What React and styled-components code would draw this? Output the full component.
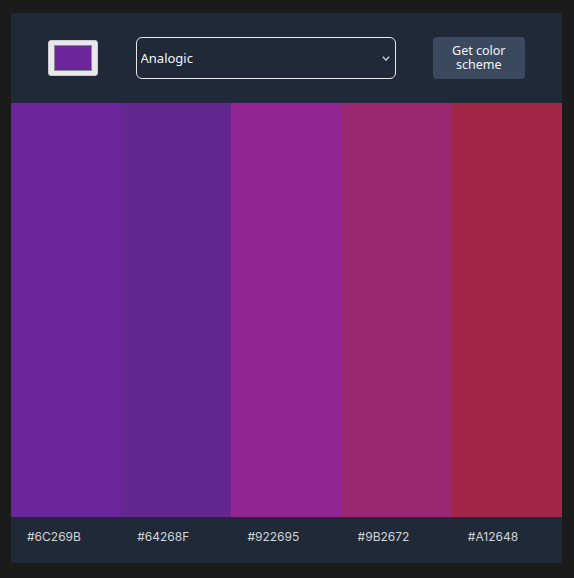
import styled, { createGlobalStyle } from 'styled-components'

const colors = ['#6C269B', '#64268F', '#922695', '#9B2672', '#A12648']

const GlobalStyle = createGlobalStyle`
  html, body {
    margin: 0;
    background-color: #1b1b1b;
  }
  #root {
    padding: 13px 0 15px;
  }
`

export default function App() {
  return (
    <>
      <GlobalStyle />
      <Wrapper>
        <Header>
          <ColorPicker type="color" defaultValue="#6c269b" />
          <SelectWrap>
            <Select defaultValue="analogic">
              <option value="monochrome">Monochrome</option>
              <option value="analogic">Analogic</option>
              <option value="complement">Complement</option>
            </Select>
            <Chevron width="8" height="5" viewBox="0 0 8 5">
              <path d="M0.8 0.8 L4 4 L7.2 0.8" fill="none" stroke="#d1d5db" strokeWidth="1.3" />
            </Chevron>
          </SelectWrap>
          <GetButton>Get color<br />scheme</GetButton>
        </Header>
        <Strip>
          {colors.map(c => <Swatch key={c} $color={c} />)}
        </Strip>
        <Footer>
          {colors.map(c => <HexLabel key={c}>{c}</HexLabel>)}
        </Footer>
      </Wrapper>
    </>
  )
}

const Wrapper = styled.main`
width: 551px;
margin: 0 0 0 11px;
display: flex;
flex-direction: column;
`

const Header = styled.header`
height: 90px;
background-color: #1f2937;
display: flex;
align-items: center;
justify-content: space-evenly;
`

const ColorPicker = styled.input`
width: 50px;
height: 36px;
padding: 4px 5px;
box-sizing: border-box;
border: 1px solid #c9c9d0;
border-radius: 3px;
background-color: #e9e8ed;
cursor: pointer;

&::-webkit-color-swatch-wrapper{
  padding: 0;
}

&::-webkit-color-swatch{
  border: 1px solid #8a8a8f;
  border-radius: 0;
}
`

const SelectWrap = styled.div`
position: relative;
display: flex;
`

const Select = styled.select`
appearance: none;
width: 260px;
height: 42px;
box-sizing: border-box;
background-color: #1f2937;
color: #f3f4f6;
border: 1px solid #e5e7eb;
border-radius: 6px;
padding: 0 4px;
font-family: "Noto Sans", sans-serif;
font-size: 13px;
`

const Chevron = styled.svg`
position: absolute;
right: 6px;
top: 19px;
pointer-events: none;
`

const GetButton = styled.button`
width: 92px;
height: 42px;
border: none;
border-radius: 4px;
background-color: #3b495e;
color: #f3f4f6;
font-family: "Noto Sans", sans-serif;
font-size: 12.5px;
line-height: 14px;
padding: 0;
`

const Strip = styled.section`
height: 414px;
display: grid;
grid-template-columns: repeat(5, 1fr);
`

const Swatch = styled.div`
background-color: ${p => p.$color};
`

const Footer = styled.footer`
height: 46px;
background-color: #1f2937;
display: grid;
grid-template-columns: repeat(5, 1fr);
align-items: start;
padding-top: 12px;
box-sizing: border-box;
`

const HexLabel = styled.span`
padding-left: 16px;
color: #d1d5db;
font-family: Inter, sans-serif;
font-size: 12px;
line-height: 16px;
`
